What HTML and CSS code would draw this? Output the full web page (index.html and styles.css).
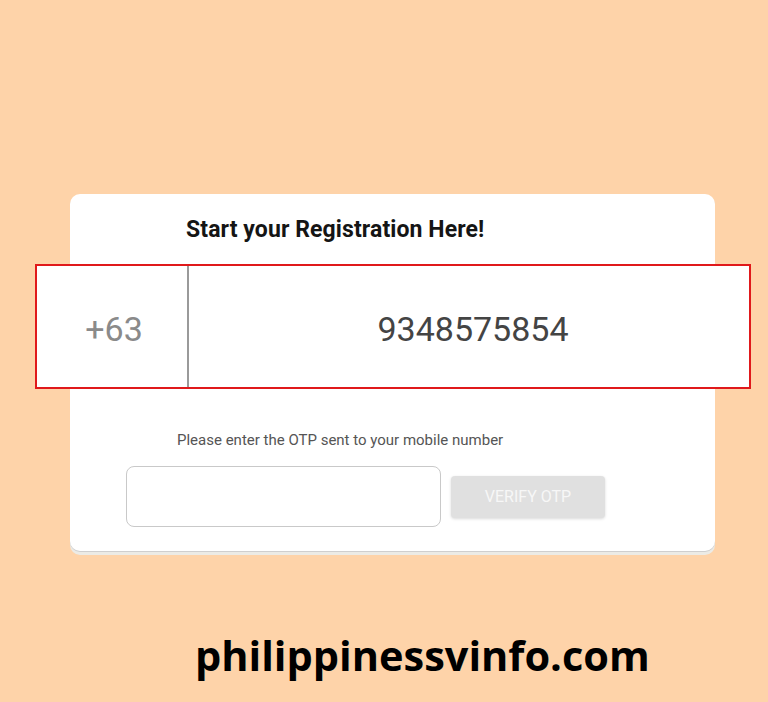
FILE: index.html
```html
<!DOCTYPE html>
<html>
<head>
<meta charset="utf-8">
<link rel="stylesheet" href="styles.css">
</head>
<body>
<div class="page">
  <div class="card">
    <h1 class="title">Start your Registration Here!</h1>
    <div class="phone-row">
      <div class="code">+63</div>
      <div class="number">9348575854</div>
    </div>
    <p class="otp-label">Please enter the OTP sent to your mobile number</p>
    <div class="otp-row">
      <div class="otp-input"></div>
      <div class="verify-btn">VERIFY OTP</div>
    </div>
  </div>
  <div class="site">philippinessvinfo.com</div>
</div>
</body>
</html>
```
FILE: styles.css
```css
* { box-sizing: border-box; }
html, body { margin: 0; padding: 0; }
body {
  background: #fed3a9;
  font-family: Roboto, "Liberation Sans", sans-serif;
  width: 768px;
  height: 702px;
  overflow: hidden;
}
.page {
  padding-top: 194px;
}
.card {
  margin-left: 70px;
  width: 645px;
  height: 357px;
  background: #fff;
  border-radius: 10px;
  padding-top: 23px;
  box-shadow: 0 1px 0 #cfcfcf, 0 4px 0 #ecebe6;
}
.title {
  margin: 0 0 0 116px;
  font-size: 23px;
  line-height: 26px;
  font-weight: 700;
  letter-spacing: 0.1px;
  color: #151515;
}
.phone-row {
  margin: 21px -36px 0 -35px;
  height: 125px;
  border: 2px solid #e0191b;
  background: #fff;
  display: flex;
  position: relative;
}
.code {
  width: 152px;
  border-right: 2px solid #9a9a9a;
  display: flex;
  align-items: center;
  justify-content: center;
  font-size: 34px;
  color: #8a8a8a;
  padding-top: 4px;
  padding-left: 4px;
}
.number {
  flex: 1;
  display: flex;
  align-items: center;
  justify-content: center;
  font-size: 34px;
  color: #444;
  padding-top: 4px;
  padding-left: 8px;
}
.otp-label {
  margin: 42px 0 0 107px;
  font-size: 15px;
  line-height: 18px;
  color: #555;
}
.otp-row {
  margin: 17px 0 0 56px;
  display: flex;
  align-items: center;
  gap: 10px;
}
.otp-input {
  width: 315px;
  height: 61px;
  border: 1px solid #c9c9c9;
  border-radius: 8px;
}
.verify-btn {
  width: 154px;
  height: 42px;
  background: #e0e0e0;
  border-radius: 4px;
  box-shadow: 0 1px 3px rgba(0,0,0,0.15);
  color: #f7f7f7;
  font-size: 16px;
  display: flex;
  align-items: center;
  justify-content: center;
}
.site {
  margin: 79px 0 0 195px;
  font-family: "Open Sans", sans-serif;
  font-weight: 700;
  font-size: 41.5px;
  line-height: 50px;
  color: #000;
}
```
